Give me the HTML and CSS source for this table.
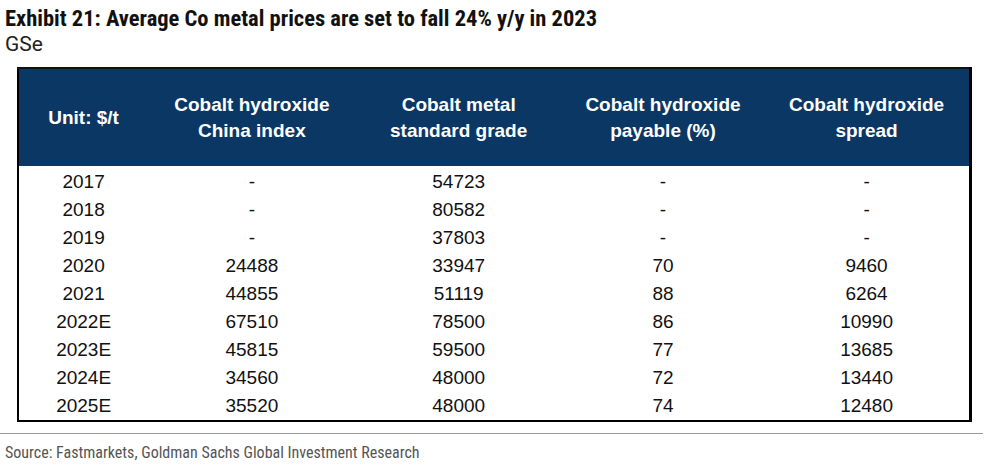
FILE: index.html
```html
<!DOCTYPE html>
<html>
<head>
<meta charset="utf-8">
<link rel="stylesheet" href="styles.css">
</head>
<body>
<div class="page">
  <h1 class="title">Exhibit 21: Average Co metal prices are set to fall 24% y/y in 2023</h1>
  <div class="subtitle">GSe</div>
  <table class="data">
    <colgroup>
      <col class="c1"><col class="c2"><col class="c3"><col class="c4"><col class="c5">
    </colgroup>
    <thead>
      <tr>
        <th>Unit: $/t</th>
        <th>Cobalt hydroxide<br>China index</th>
        <th>Cobalt metal<br>standard grade</th>
        <th>Cobalt hydroxide<br>payable (%)</th>
        <th>Cobalt hydroxide<br>spread</th>
      </tr>
    </thead>
    <tbody>
      <tr class="first"><td>2017</td><td>-</td><td>54723</td><td>-</td><td>-</td></tr>
      <tr><td>2018</td><td>-</td><td>80582</td><td>-</td><td>-</td></tr>
      <tr><td>2019</td><td>-</td><td>37803</td><td>-</td><td>-</td></tr>
      <tr><td>2020</td><td>24488</td><td>33947</td><td>70</td><td>9460</td></tr>
      <tr><td>2021</td><td>44855</td><td>51119</td><td>88</td><td>6264</td></tr>
      <tr><td>2022E</td><td>67510</td><td>78500</td><td>86</td><td>10990</td></tr>
      <tr><td>2023E</td><td>45815</td><td>59500</td><td>77</td><td>13685</td></tr>
      <tr><td>2024E</td><td>34560</td><td>48000</td><td>72</td><td>13440</td></tr>
      <tr><td>2025E</td><td>35520</td><td>48000</td><td>74</td><td>12480</td></tr>
    </tbody>
  </table>
  <div class="rule"></div>
  <div class="source">Source: Fastmarkets, Goldman Sachs Global Investment Research</div>
</div>
</body>
</html>
```

FILE: styles.css
```css
html, body {
  margin: 0;
  padding: 0;
  background: #ffffff;
}

.page {
  padding: 5px 0 0 5px;
  width: 978px;
}

.title {
  margin: 0;
  font-family: Roboto, "Liberation Sans", sans-serif;
  font-stretch: 75%;
  font-weight: bold;
  font-size: 22.5px;
  line-height: 26px;
  color: #111111;
}

.subtitle {
  font-family: Roboto, "Liberation Sans", sans-serif;
  font-stretch: 90%;
  font-size: 21px;
  line-height: 27px;
  color: #222222;
}

.data {
  margin: 9px 0 0 12px;
  border-collapse: collapse;
  table-layout: fixed;
  width: 955px;
  border-left: 2px solid #000;
  border-top: 2px solid #111;
  border-bottom: 2px solid #000;
  border-right: 3px solid #000;
  font-family: "Liberation Sans", Arial, sans-serif;
  font-size: 19px;
}

.c1 { width: 130px; }
.c2 { width: 207px; }
.c3 { width: 206px; }
.c4 { width: 202px; }
.c5 { width: 206px; }

.data th {
  background: #0b3765;
  color: #ffffff;
  font-weight: bold;
  line-height: 26px;
  height: 97px;
  padding: 0;
  text-align: center;
  vertical-align: middle;
}

.data td {
  height: 28px;
  line-height: 28px;
  padding: 0;
  text-align: center;
  color: #111111;
}

.data .first td {
  padding-top: 2px;
}

.rule {
  margin: 11px 0 0 -5px;
  width: 983px;
  height: 1px;
  background: #9a9a9a;
}

.source {
  margin-top: 9px;
  font-family: Roboto, "Liberation Sans", sans-serif;
  font-stretch: 85%;
  font-size: 16px;
  line-height: 20px;
  color: #555555;
}
```
